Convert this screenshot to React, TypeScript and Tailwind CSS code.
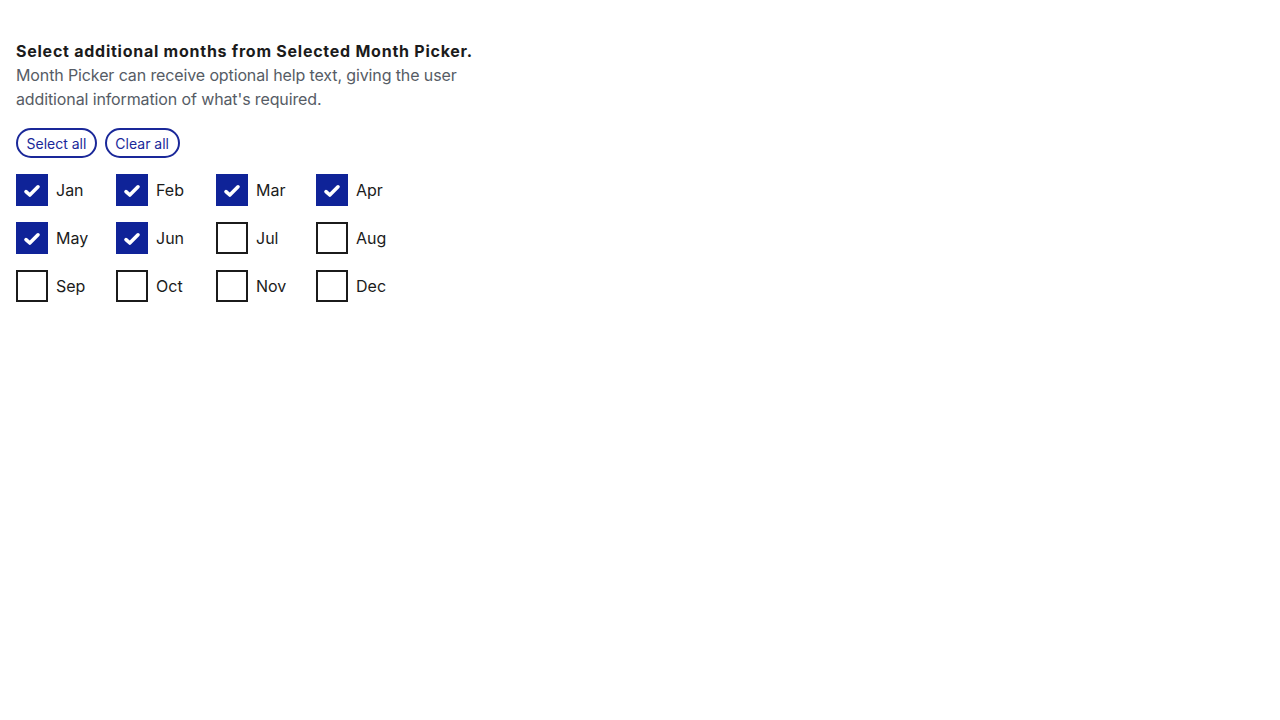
import { useState } from "react";

const months = ["Jan", "Feb", "Mar", "Apr", "May", "Jun", "Jul", "Aug", "Sep", "Oct", "Nov", "Dec"];

function Check() {
	return (
		<svg viewBox="0 0 18 16" className="mt-[2px] h-[16px] w-[18px]" fill="none">
			<path d="M3 8.6 L6.8 12 L15 3.8" stroke="#fff" strokeWidth="3.6" strokeLinecap="round" strokeLinejoin="round" />
		</svg>
	);
}

export default function App() {
	const [picked, setPicked] = useState<string[]>(months.slice(0, 6));

	const toggle = (m: string) =>
		setPicked((p) => (p.includes(m) ? p.filter((x) => x !== m) : [...p, m]));

	return (
		<div className="min-h-screen bg-white px-4 pt-[40px] font-['Inter','Noto_Sans',sans-serif] text-[#1b1b1b]">
			<p className="text-[16px] font-bold leading-[23px] tracking-[0.75px]">
				Select additional months from Selected Month Picker.
			</p>
			<p className="w-[460px] text-[16px] leading-[24px] tracking-[-0.12px] text-[#565c65]">
				Month Picker can receive optional help text, giving the user additional information of what's required.
			</p>

			<div className="mt-[17px] flex gap-2">
				<button
					onClick={() => setPicked(months)}
					className="h-[30px] rounded-full border-2 border-[#1a2899] px-[8.5px] text-[14px] text-[#1a2899]"
				>
					Select all
				</button>
				<button
					onClick={() => setPicked([])}
					className="h-[30px] rounded-full border-2 border-[#1a2899] px-[8.5px] text-[14px] text-[#1a2899]"
				>
					Clear all
				</button>
			</div>

			<div className="mt-4 grid w-[400px] grid-cols-4 gap-y-4">
				{months.map((m) => {
					const on = picked.includes(m);
					return (
						<label key={m} className="flex h-8 cursor-pointer items-center gap-2" onClick={() => toggle(m)}>
							<span
								className={
									on
										? "flex h-8 w-8 items-center justify-center bg-[#0f2398]"
										: "h-8 w-8 border-2 border-[#1b1b1b] bg-white"
								}
							>
								{on && <Check />}
							</span>
							<span className="text-[16px]">{m}</span>
						</label>
					);
				})}
			</div>
		</div>
	);
}
